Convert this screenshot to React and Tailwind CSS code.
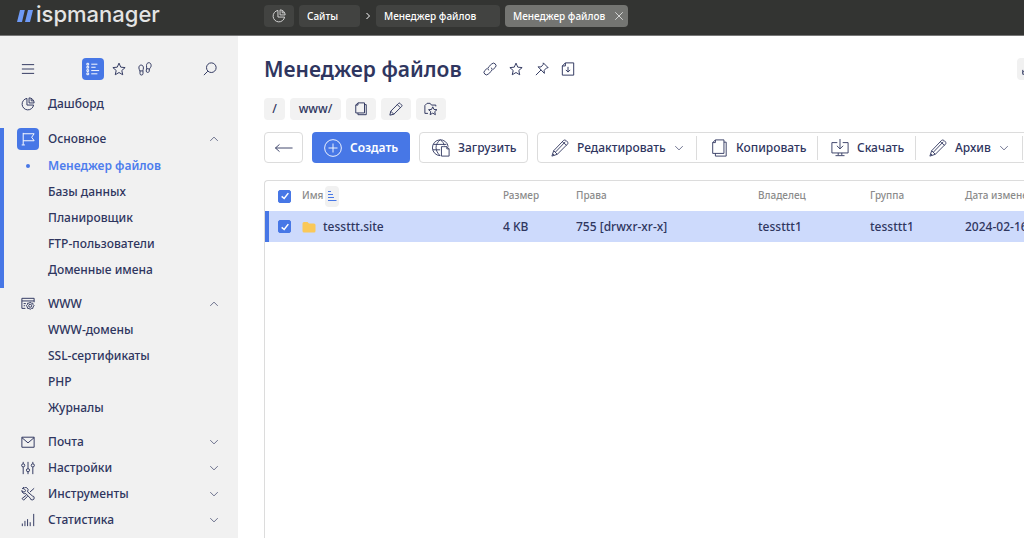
// src/App.jsx

const icons = {
    chart: (
        <>
            <path d="M6.800 1.600A6.600 6.600 0 1 0 14.400 9.200H6.800z" />
            <path d="M9.200 1v5.800H15A5.800 5.800 0 0 0 9.200 1zM11.600 2v2.400H14" />
        </>
    ),
    menu: <path d="M1 3h14M1 8h14M1 13h14" />,
    list: (
        <>
            <path d="M6 2.500h7M6 6h5M6 9.800h9M6 13.500h7" />
            <path d="M1 1.500h2v2H1zM1 5h2v2H1zM1 8.800h2v2H1zM1 12.500h2v2H1z" />
        </>
    ),
    star: <path d="M8 1.300l2 4.600 5 .5-3.800 3.300 1.100 4.900L8 12l-4.300 2.600 1.100-4.900L1 6.400l5-.5z" />,
    steps: (
        <>
            <path d="M1 6.800c0-2.200 1-3.300 2.600-3.300s2.600 1.300 2.600 3.300c0 1.500-.5 2.200-.7 3.400H2.100C1.900 9 1 8.200 1 6.800z" />
            <path d="M2.300 10.200v3a1.700 1.700 0 0 0 3.400 0v-3" />
            <path d="M15 4.200c0-2.200-1-3.400-2.600-3.400S9.800 2 9.700 4c0 1.500.3 2.200.2 3.500l3.200.6c.3-1.300 1.900-1.900 1.900-3.900z" />
            <path d="M9.800 7.500l-.4 2.700a1.700 1.700 0 0 0 3.300.6l.4-2.700" />
        </>
    ),
    search: (
        <>
            <circle cx="9.500" cy="6.500" r="5.500" />
            <path d="M5.500 10.500L1 15" />
        </>
    ),
    flag: <path d="M2.500 1v13.500M.8 14.800h3.600M2.500 2H15l-2.800 4L15 10H2.500" />,
    www: (
        <>
            <path d="M5 13H1V1.500h14V6M1 4.500h14M3 7.500h2.500M3 10h1.500" />
            <path d="M10.500 6l1.300 1 1.700.1.300 1.700 1.200 1.200-1.200 1.300-.3 1.700-1.700.1-1.300 1-1.300-1-1.700-.1-.3-1.700L6 10l1.200-1.200.3-1.700 1.700-.1z" />
            <circle cx="10.500" cy="10" r="1.700" />
        </>
    ),
    mail: <path d="M1 2.500h14v11.500H1zM1 3l7 6 7-6" />,
    sliders: (
        <>
            <path d="M2.500 1v2M2.500 7v8M8 1v7.500M8 12.500V15M13.500 1v2M13.500 7v8" />
            <circle cx="2.500" cy="5" r="1.800" />
            <circle cx="8" cy="10.500" r="1.800" />
            <circle cx="13.500" cy="5" r="1.800" />
        </>
    ),
    tools: (
        <>
            <path d="M1.500 1.800l2.200.2 1.500 2-.8 1.500-2 .2L1 4a3.500 3.500 0 0 0 4.500 3.500l5 5.200a2.300 2.300 0 1 0 2.500-2.500L7.500 5.500A3.500 3.500 0 0 0 1.500 1.800z" />
            <path d="M15 1.500l-4.800 4.300M6.200 9.200l-5 4 1.800 1.800 4.700-4.500M12.500 12.500h.2" />
        </>
    ),
    stats: <path d="M1.500 15v-3M4.500 15V9M7.500 15V7M10.500 15v-4.500M14.500 15V1" />,
    link: (
        <>
            <path d="M6.500 9.500a2.800 2.800 0 0 1 0-4L10 2.200a2.800 2.800 0 0 1 4 4L11.500 8.500" />
            <path d="M9.500 6.500a2.800 2.800 0 0 1 0 4L6 13.800a2.800 2.800 0 0 1-4-4L4.500 7.500" />
        </>
    ),
    pin: <path d="M9.500 1L15 6.500l-1.800.3-2.700 2.700.2 3.500L3.500 5.500l3.300.2L9.300 3zM7 9l-6 6" />,
    fileDown: <path d="M5 1h9.500v14h-13V4.500zM5 1v3.500H1.500M8 5.500v6M5.500 9L8 11.500 10.500 9" />,
    copy: <path d="M4.500 1H12v11.500H2V3.500zM4.500 1v2.500H2M12 3h2v11.500H4.500v-2" />,
    pencil: <path d="M11 1.500a1 1 0 0 1 1.500 0l2 2a1 1 0 0 1 0 1.500L5.500 14 1 15l1-4.500zM9.500 3L13 6.500M2 10.500L5.500 14" />,
    folderStar: (
        <>
            <path d="M4.500 13H1V4l2.500-2.500H7L8.500 3.500h5V5" />
            <path d="M10 5.500l1.400 3 3.400.3-2.500 2.200.7 3.500-3-1.800-3 1.800.7-3.500-2.500-2.200 3.400-.3z" />
        </>
    ),
    close: <path d="M2 2l12 12M14 2L2 14" />,
    up: <path d="M2 11l6-6 6 6" />,
    down: <path d="M2 5l6 6 6-6" />,
    right: <path d="M5 2l6 6-6 6" />,
    edge: <path d="M2 12l5-5M10 2h4v4M2 9v5h5" />,
};

const bigIcons = {
    back: <path d="M19.500 10H.5M5 6L.5 10 5 14" />,
    plus: (
        <>
            <circle cx="10" cy="10" r="9.300" />
            <path d="M10 5v10M5 10h10" />
        </>
    ),
    globe: (
        <>
            <path d="M9 18.500A8.800 8.800 0 1 1 18 8.500M9 1c-6 5-6 12 0 17.500M9.500 1c2.500 2 3.700 4 4 6M1.500 6h14.500M1 12h8" />
            <path d="M13 8.500h3.500L19 11v8h-8.500V8.500H13zM16.500 8.500V11H19" />
        </>
    ),
    pencil: <path d="M14 1.500c1.500-1.500 6 2 4.500 4L7 17l-6 2 2-6zM12.500 3l4.800 4M3 13l4 4M16 3L5 14.500M2 16.500l1.500 1.500" />,
    copy: <path d="M6 1h9.500v15H3V4zM6 1v3H3M15.500 3.500H18V19H6v-3" />,
    download: <path d="M7 4H1v11.500h18V4h-6M10 0v11M6.500 7.500L10 11l3.500-3.500M8 15.500V18M12 15.500V18M5 18.500h10" />,
};

const sections = [
    {
        title: "Основное",
        icon: "flag",
        open: true,
        items: ["Менеджер файлов", "Базы данных", "Планировщик", "FTP-пользователи", "Доменные имена"],
    },
    {
        title: "WWW",
        icon: "www",
        open: true,
        items: ["WWW-домены", "SSL-сертификаты", "PHP", "Журналы"],
    },
    { title: "Почта", icon: "mail" },
    { title: "Настройки", icon: "sliders" },
    { title: "Инструменты", icon: "tools" },
    { title: "Статистика", icon: "stats" },
];

const current = "Менеджер файлов";

function Icon({ name, className = "size-3.5" }) {
    return (
        <svg viewBox="0 0 16 16" className={`shrink-0 ${className}`} fill="none" stroke="currentColor" strokeWidth="1.1" aria-hidden="true">
            {icons[name]}
        </svg>
    );
}

function BigIcon({ name }) {
    return (
        <svg viewBox="0 0 20 20" className="size-[18px] shrink-0" fill="none" stroke="currentColor" strokeWidth="1" aria-hidden="true">
            {bigIcons[name]}
        </svg>
    );
}

function Header() {
    return (
        <header className="flex h-9 shrink-0 items-center overflow-hidden border-b border-[#777] bg-[#333432] text-white">
            <a href="#" className="flex w-[264px] shrink-0 items-center gap-[3px] pl-[17px] text-[#e4e4e4]">
                <svg viewBox="0 0 16 12" className="-mt-1 h-3 w-4" fill="#6f9bf7" aria-hidden="true">
                    <path d="M3 0h4.800L5 12H0zM11 0h5l-3 12H8z" />
                </svg>
                <span className="-mt-2 font-['Inter'] text-[22px] leading-7 font-medium">ispmanager</span>
            </a>
            <nav className="-mt-1 flex shrink-0 items-center text-[10px] leading-4 font-medium whitespace-nowrap">
                <button aria-label="Дашборд" className="mr-[5px] grid h-[22px] w-[30px] place-items-center rounded bg-[#424341] text-[#d5d5d5]">
                    <Icon name="chart" />
                </button>
                <button className="h-[22px] w-[61px] rounded bg-[#424341] pl-2 text-left">Сайты</button>
                <Icon name="right" className="mx-1 size-2 stroke-2" />
                <button className="mr-[5px] h-[22px] w-[124px] rounded bg-[#424341] pl-2 text-left">Менеджер файлов</button>
                <button className="flex h-[22px] w-[123px] items-center justify-between rounded bg-[#747572] px-2">
                    Менеджер файлов
                    <Icon name="close" className="-mr-1 size-2.5" />
                </button>
            </nav>
        </header>
    );
}

function Section({ title, icon, open, items = [] }) {
    const active = items.includes(current);

    return (
        <div className={active ? "border-l-4 border-[#4777e6] pb-[5px]" : open ? "border-l-4 border-transparent pt-[3px] pb-2" : "border-l-4 border-transparent"}>
            <button className={`flex w-full items-center pr-[19px] text-left ${active ? "mb-[3px] h-[22px]" : "h-[26px]"}`}>
                <span className="grid w-12 place-items-center">
                    <span className={`grid size-[22px] place-items-center rounded ${active ? "bg-[#4777e6] text-white" : ""}`}>
                        <Icon name={icon} />
                    </span>
                </span>
                <span className="-ml-1 flex-1">{title}</span>
                <Icon name={open ? "up" : "down"} className="size-2.5" />
            </button>
            {items.map((item) => (
                <a
                    key={item}
                    href="#"
                    className={`flex h-[26px] items-center ${item === current ? "font-semibold text-[#4d7ded]" : ""}`}
                >
                    <span className="grid w-11 place-items-center pl-1">
                        {item === current && <span className="size-1 rounded-full bg-[#4777e6]" />}
                    </span>
                    {item}
                </a>
            ))}
        </div>
    );
}

function Sidebar() {
    return (
        <aside className="w-[238px] shrink-0 bg-[#f1f1f1] pt-[22px]">
            <div className="flex h-[22px] items-center px-[21px]">
                <button aria-label="Меню"><Icon name="menu" /></button>
                <button aria-label="Список" className="ml-[47px] grid size-[22px] place-items-center rounded bg-[#4777e6] text-white">
                    <Icon name="list" />
                </button>
                <button aria-label="Избранное" className="ml-2"><Icon name="star" /></button>
                <button aria-label="История" className="ml-3"><Icon name="steps" /></button>
                <button aria-label="Поиск" className="ml-auto"><Icon name="search" /></button>
            </div>
            <nav>
                <a href="#" className="my-[11px] flex h-[26px] items-center">
                    <span className="grid w-12 place-items-center pl-2">
                        <Icon name="chart" />
                    </span>
                    Дашборд
                </a>
                {sections.map((section) => (
                    <Section key={section.title} {...section} />
                ))}
            </nav>
        </aside>
    );
}

function TitleRow() {
    return (
        <div className="flex h-[30px] items-center justify-between">
            <div className="flex items-center gap-3">
                <h1 className="mr-[9px] text-[21px] leading-[30px] font-semibold">Менеджер файлов</h1>
                <button aria-label="Ссылка"><Icon name="link" /></button>
                <button aria-label="В избранное"><Icon name="star" /></button>
                <button aria-label="Закрепить"><Icon name="pin" /></button>
                <button aria-label="Экспорт"><Icon name="fileDown" /></button>
            </div>
            <button aria-label="Развернуть" className="grid size-[22px] place-items-center rounded bg-[#f1f1f1]">
                <Icon name="edge" />
            </button>
        </div>
    );
}

function PathBar() {
    return (
        <div className="mt-3.5 flex gap-[5px]">
            <button className="h-[22px] w-[21px] rounded bg-[#f2f2f2]">/</button>
            <button className="h-[22px] w-[51px] rounded bg-[#f2f2f2]">www/</button>
            {[["Копировать путь", "copy"], ["Изменить путь", "pencil"], ["Добавить папку", "folderStar"]].map(([label, icon]) => (
                <button key={icon} aria-label={label} className="grid h-[22px] w-[30px] place-items-center rounded bg-[#f2f2f2]">
                    <Icon name={icon} />
                </button>
            ))}
        </div>
    );
}

function GroupButton({ icon, label, menu, className }) {
    return (
        <button className={`flex h-6 shrink-0 items-center pl-[13px] ${className}`}>
            <BigIcon name={icon} />
            <span className="ml-2">{label}</span>
            {menu && <Icon name="down" className="ml-2 size-2.5" />}
        </button>
    );
}

function Toolbar() {
    return (
        <div className="mt-3 flex gap-[9px]">
            <button aria-label="Назад" className="grid h-[31px] w-[39px] shrink-0 place-items-center rounded border border-[#dcdcdc]">
                <BigIcon name="back" />
            </button>
            <button className="flex h-[31px] w-[98px] shrink-0 items-center gap-2 rounded bg-[#4777e6] pl-3 font-semibold text-white">
                <BigIcon name="plus" />
                Создать
            </button>
            <button className="flex h-[31px] w-[109px] shrink-0 items-center gap-2 rounded border border-[#dcdcdc] pl-3">
                <BigIcon name="globe" />
                Загрузить
            </button>
            <div className="flex h-[31px] shrink-0 items-center divide-x divide-[#dcdcdc] rounded border border-[#dcdcdc]">
                <GroupButton icon="pencil" label="Редактировать" menu className="w-[159px]" />
                <GroupButton icon="copy" label="Копировать" className="w-[121px]" />
                <GroupButton icon="download" label="Скачать" className="w-[98px]" />
                <GroupButton icon="pencil" label="Архив" menu className="w-[107px]" />
                <button aria-label="Ещё" className="h-6 w-10" />
            </div>
        </div>
    );
}

function Checkbox({ label }) {
    return (
        <label className="grid size-[13px] place-items-center">
            <input
                type="checkbox"
                defaultChecked
                aria-label={label}
                className="peer col-start-1 row-start-1 size-[13px] appearance-none rounded-xs border border-[#4777e6] checked:bg-[#4777e6]"
            />
            <svg viewBox="0 0 12 12" className="pointer-events-none z-10 col-start-1 row-start-1 hidden size-2.5 peer-checked:block" fill="none" stroke="#fff" strokeWidth="1.8" aria-hidden="true">
                <path d="M2 6.500L5 9l5-6.500" />
            </svg>
        </label>
    );
}

function FileTable() {
    return (
        <div className="mt-[17px] w-[860px] flex-1 rounded-t border-t border-l border-[#dcdcdc]">
            <table className="w-full table-fixed border-separate border-spacing-0 text-left">
                <colgroup>
                    <col className="w-[37px]" />
                    <col className="w-[201px]" />
                    <col className="w-[73px]" />
                    <col className="w-[182px]" />
                    <col className="w-[112px]" />
                    <col className="w-[95px]" />
                    <col />
                </colgroup>
                <thead className="text-[10px] text-[#8b8b8b]">
                    <tr className="h-[30px]">
                        <th className="pl-[13px]"><Checkbox label="Выбрать все" /></th>
                        <th className="font-medium">
                            <button className="flex items-center gap-0.5">
                                Имя
                                <span className="grid h-[21px] w-3.5 place-items-center rounded bg-[#f1f1f1] text-[#4777e6]">
                                    <svg viewBox="0 0 10 10" className="size-2.5" stroke="currentColor" aria-hidden="true">
                                        <path d="M1 .5h3M1 3.500h5M1 6.500h6M1 9.500h8.500" />
                                    </svg>
                                </span>
                            </button>
                        </th>
                        <th className="font-medium">Размер</th>
                        <th className="font-medium">Права</th>
                        <th className="font-medium">Владелец</th>
                        <th className="font-medium">Группа</th>
                        <th className="font-medium">Дата изменения</th>
                    </tr>
                </thead>
                <tbody className="text-xs">
                    <tr className="h-[31px] bg-[#cddafc]">
                        <td className="border-l-4 border-[#4777e6] pl-[9px]"><Checkbox label="tessttt.site" /></td>
                        <td>
                            <span className="flex items-center gap-[7px]">
                                <svg viewBox="0 0 14 12" className="h-3 w-3.5" fill="#fac858" aria-hidden="true">
                                    <path d="M2 1h3.500L7 2.500h5a1.500 1.500 0 0 1 1.500 1.500v6a1.500 1.500 0 0 1-1.500 1.500H2A1.500 1.500 0 0 1 .5 10V2.500A1.500 1.500 0 0 1 2 1z" />
                                </svg>
                                tessttt.site
                            </span>
                        </td>
                        <td>4 KB</td>
                        <td>755 [drwxr-xr-x]</td>
                        <td>tessttt1</td>
                        <td>tessttt1</td>
                        <td>2024-02-16</td>
                    </tr>
                </tbody>
            </table>
        </div>
    );
}

export default function App() {
    return (
        <div className="flex h-screen flex-col overflow-hidden bg-white font-['Noto_Sans',sans-serif] text-xs font-medium text-[#2f365f]">
            <Header />
            <div className="flex min-h-0 flex-1">
                <Sidebar />
                <main className="flex min-w-0 flex-1 flex-col overflow-hidden pt-[18px] pl-[26px]">
                    <div className="flex min-w-[775px] flex-1 flex-col">
                        <TitleRow />
                        <PathBar />
                        <Toolbar />
                        <FileTable />
                    </div>
                </main>
            </div>
        </div>
    );
}
